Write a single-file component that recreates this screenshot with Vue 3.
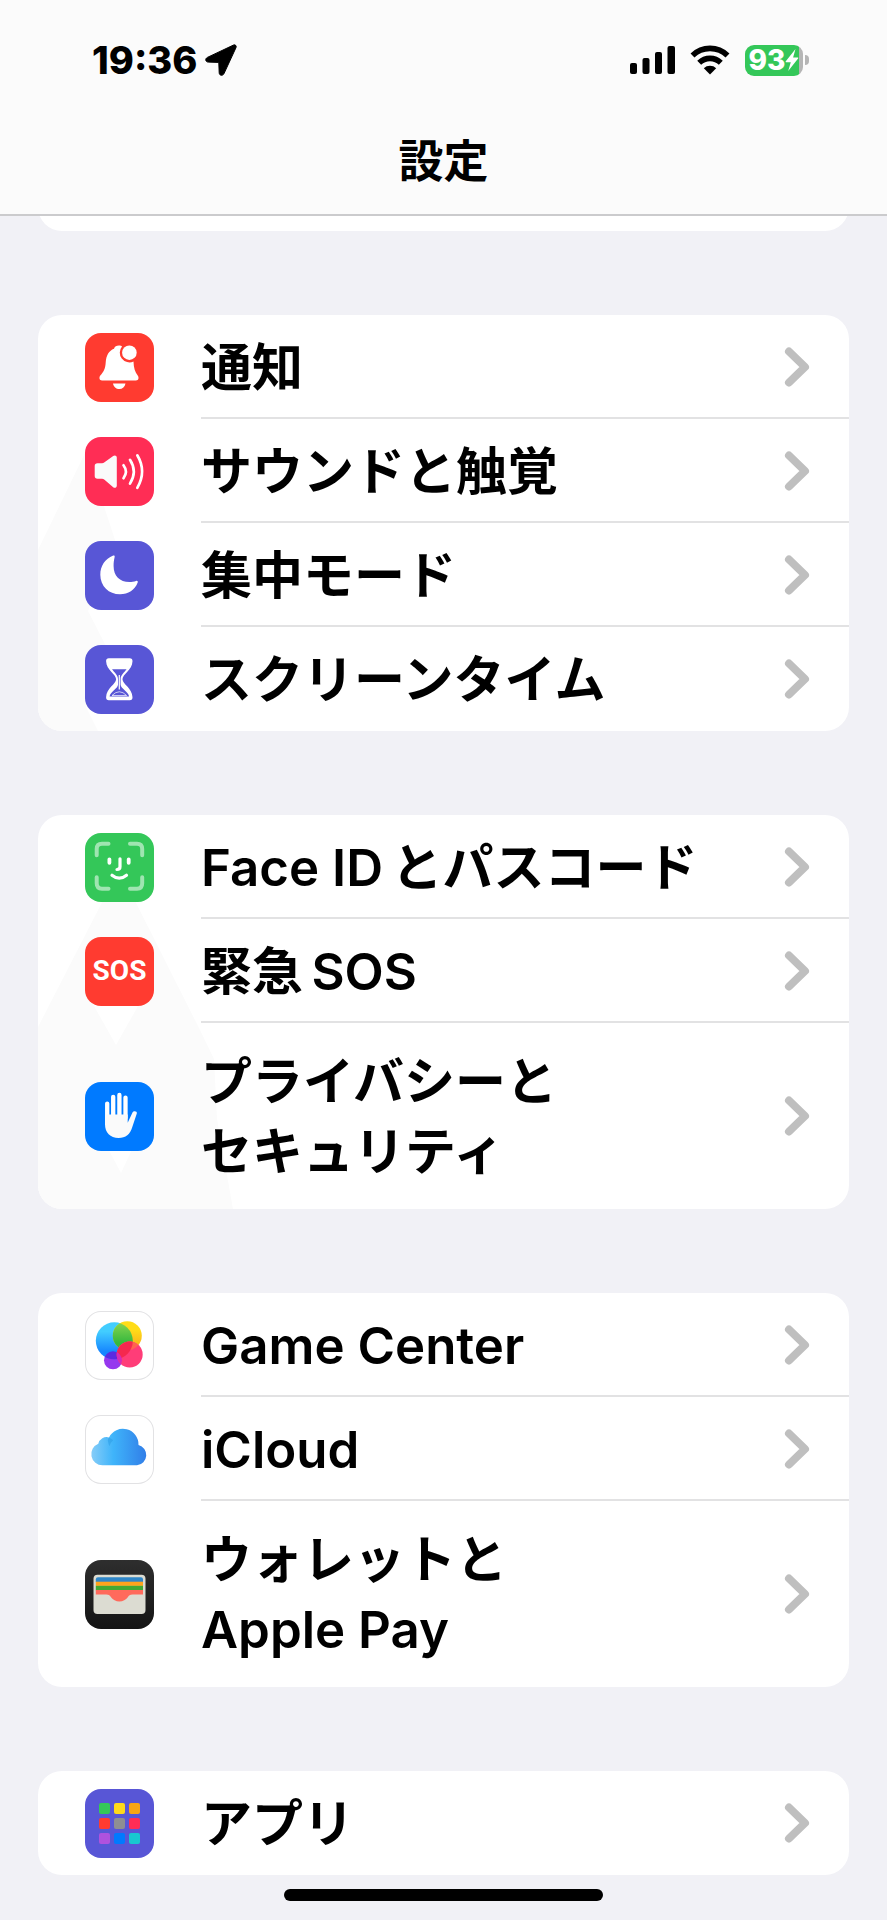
<script setup>
const groups = [
  {
    id: 'general',
    shade: 'shade-low',
    rows: [
      { icon: 'bell', lines: ['通知'] },
      { icon: 'sound', lines: ['サウンドと触覚'] },
      { icon: 'moon', lines: ['集中モード'] },
      { icon: 'hourglass', lines: ['スクリーンタイム'] },
    ],
  },
  {
    id: 'security',
    shade: 'shade-wide',
    rows: [
      { icon: 'face', lines: ['Face ID\u2009とパスコード'] },
      { icon: 'sos', lines: ['緊急\u2009SOS'] },
      { icon: 'hand', lines: ['プライバシーと', 'セキュリティ'] },
    ],
  },
  {
    id: 'services',
    shade: '',
    rows: [
      { icon: 'game', lines: ['Game Center'] },
      { icon: 'cloud', lines: ['iCloud'] },
      { icon: 'wallet', lines: ['ウォレットと', 'Apple Pay'] },
    ],
  },
  { id: 'apps', shade: '', rows: [{ icon: 'apps', lines: ['アプリ'] }] },
]

const appColors = ['#34c759', '#ffd91a', '#f7a516', '#ff3b30', '#8e8e93', '#ff2d55', '#af52de', '#007aff', '#18c8d0']
const tiles = appColors.map((fill, i) => ({ fill, x: 14 + (i % 3) * 15, y: 14 + Math.floor(i / 3) * 15 }))
</script>

<template>
  <div class="screen">
    <header class="top">
      <div class="status">
        <div class="status-side">
          <span class="clock">19:36</span>
          <svg class="locate" viewBox="0 0 32 32" aria-hidden="true">
            <path d="M28.600 1 2.400 13.400c-2.600 1.300-2 4.600.8 4.700l10 .3c.4 0 .6.2.6.6l.4 9.800c.1 3 3.600 3.400 4.800.8L31 3.600c.8-1.700-.7-3.300-2.400-2.600z" stroke="#000" />
          </svg>
        </div>
        <div class="status-side">
          <svg class="bars" viewBox="0 0 46 30" aria-hidden="true">
            <rect x="0" y="18" width="7" height="11" rx="2" />
            <rect x="12.500" y="13" width="7" height="16" rx="2" />
            <rect x="25" y="7" width="7" height="22" rx="2" />
            <rect x="37.500" y="1" width="7.500" height="28" rx="2" />
          </svg>
          <svg class="wifi" viewBox="0 0 40 30" aria-hidden="true">
            <path d="M2.500 10.500a25 25 0 0 1 35 0M9.200 17.800a15.500 15.500 0 0 1 21.600 0" fill="none" stroke="#000" stroke-width="5.600" />
            <path d="M20 29.500l-6.200-6.300a9 9 0 0 1 12.400 0z" />
          </svg>
          <div class="battery">
            <div class="battery-body">
              <span>93</span>
              <svg viewBox="0 0 14 22" aria-hidden="true"><path d="M10.500 0 .8 12.200c-.4.500-.1 1 .5 1h4.500L3.200 22l9.900-12.400c.4-.5.100-1-.5-1H8.100z" fill="#fff" /></svg>
            </div>
            <i class="battery-tip"></i>
          </div>
        </div>
      </div>
      <h1>設定</h1>
    </header>

    <main class="list">
      <div class="card card-tail"></div>
      <ul v-for="group in groups" :key="group.id" class="card" :class="group.shade">
        <li v-for="row in group.rows" :key="row.icon">
          <a class="row" href="#">
            <span class="tile" :class="row.icon">
              <span v-if="row.icon === 'sos'" class="sos-text" aria-hidden="true">SOS</span>
              <svg v-else viewBox="0 0 69 69" aria-hidden="true">
                <g v-if="row.icon === 'bell'" fill="#fff">
                  <path d="M34 12.500c1.400 0 2.500.4 3 .9a9.800 9.800 0 0 0 11.500 15.200c.2 6.400 1.600 10.700 4.200 13.900 1.500 1.900 1 5-1.700 5H17c-2.700 0-3.200-3.100-1.700-5 3.300-3.700 5-6.700 5.400-13 .4-7.500 3.400-11.800 8.300-13.800.6-2 2.500-3.200 5-3.200z" />
                  <path d="M28 50.500h12.500c-.6 3.500-3 5.500-6.200 5.500S28.600 54 28 50.500z" />
                  <circle cx="44.400" cy="19.700" r="7.300" />
                </g>
                <g v-else-if="row.icon === 'sound'">
                  <path d="M12.500 26.300h4.500c1 0 1.700-.3 2.500-1l8.700-6.300c1.600-1.200 3.600-.3 3.600 1.500v28.300c0 1.800-2 2.700-3.600 1.500l-8.700-7.500c-.8-.7-1.500-1-2.500-1h-4.500c-1.800 0-2.800-1-2.800-2.800v-9.900c0-1.800 1-2.800 2.800-2.800z" fill="#fafafa" />
                  <path d="M38.500 28.200q4.800 6.300 0 13M45 22.800q7.600 11.700 0 23.800M52.300 18.300q9.600 16.200 0 32.600" fill="none" stroke="#fff" stroke-width="2.700" stroke-linecap="round" />
                </g>
                <path v-else-if="row.icon === 'moon'" d="M28.200 14.600C20 18 15.300 25 15.300 33.700c0 11.300 8.500 19.600 19.700 19.600 8.300 0 14.800-4.300 17.700-11.700.5-1.300-.4-2.200-1.700-1.700-2 .8-4.300 1.100-6.500 1.100C34.600 41 28.600 35 28.600 25c0-3.300.4-6.300 1-8.700.4-1.400-.3-2.100-1.400-1.700z" fill="#fff" />
                <g v-else-if="row.icon === 'hourglass'">
                  <path d="M23.800 13.300h21c1.800 0 2.800 1.200 2.700 3-.3 9-10 13-10 18s9.700 8.500 10 18c.1 1.800-.9 3-2.700 3h-21c-1.800 0-2.800-1.200-2.700-3 .3-9.500 10-13 10-18s-9.700-9-10-18c-.1-1.800.9-3 2.700-3z" fill="#fff" />
                  <path d="M27 24.300h14.600c-2 3-6 5.700-6 9.700v5.500c0 4 8 7.500 8.500 12H24.600c.5-4.500 8.400-8 8.400-12V34c0-4-4-6.700-6-9.700z" fill="#5856d6" />
                  <path d="M34.300 30v14.500" stroke="#fff" stroke-width="1.200" />
                  <path d="M27 50.500q7.300-7.500 14.600 0z" fill="#5856d6" stroke="#fff" stroke-width=".7" />
                </g>
                <g v-else-if="row.icon === 'face'" fill="none" stroke="#fff" stroke-width="4" stroke-linecap="round" stroke-linejoin="round">
                  <path d="M11.700 22.300V16q0-5.300 5.300-5.300h6.500M45 10.700h7q5.200 0 5.200 5.300v6.300M57.200 44.300v6q0 5.400-5.200 5.400h-7M23.500 55.700H17q-5.300 0-5.300-5.400v-6" stroke-opacity=".53" />
                  <path d="M24.400 26.300v3.500M43.700 26.300v3.500" stroke-width="3.800" />
                  <path d="M35 25.800v8q0 2.700-3 2.700M27 42.200c4.500 3.800 10 3.800 14.500 0" stroke-width="3.200" />
                </g>
                <g v-else-if="row.icon === 'hand'">
                  <path d="M22.200 40V21.600M28.200 36V14.800M34.400 36V13M40.500 36V15.600" fill="none" stroke="#fff" stroke-width="4.300" stroke-linecap="round" />
                  <path d="M20 32.500h22.700v8.300l4.800-10.400c.8-1.700 5-1.500 4.300 1L47.300 45c-2 7.200-6.700 11-13.700 11-8.300 0-13.600-5.300-13.600-13.700z" fill="#fafafa" />
                </g>
                <g v-else-if="row.icon === 'game'">
                  <defs>
                    <linearGradient id="gcBlue" x2="0" y2="1"><stop offset=".25" stop-color="#42cdff" /><stop offset=".8" stop-color="#1686ff" /></linearGradient>
                    <linearGradient id="gcYellow" x2="0" y2="1"><stop offset=".3" stop-color="#ffdc18" /><stop offset="1" stop-color="#f8a61c" /></linearGradient>
                    <linearGradient id="gcGreen" x2="0" y2="1"><stop offset="0" stop-color="#8dd650" /><stop offset=".75" stop-color="#35b83e" /></linearGradient>
                    <clipPath id="gcClip"><circle cx="29.300" cy="29.800" r="18.500" /></clipPath>
                    <clipPath id="gcPink"><circle cx="44.700" cy="43.500" r="13" /></clipPath>
                  </defs>
                  <circle cx="28" cy="49.300" r="9" fill="#9637ee" />
                  <circle cx="29.300" cy="29.800" r="18.500" fill="url(#gcBlue)" />
                  <circle cx="28" cy="49.300" r="9" fill="#5b2be0" clip-path="url(#gcClip)" />
                  <circle cx="42.300" cy="24.700" r="14.500" fill="url(#gcYellow)" />
                  <circle cx="42.300" cy="24.700" r="14.500" fill="url(#gcGreen)" clip-path="url(#gcClip)" />
                  <circle cx="44.700" cy="43.500" r="13" fill="#ff3d78" />
                  <g clip-path="url(#gcPink)">
                    <circle cx="42.300" cy="24.700" r="14.500" fill="#ff6350" />
                    <circle cx="29.300" cy="29.800" r="18.500" fill="#f5284f" />
                    <circle cx="28" cy="49.300" r="9" fill="#d42bb8" />
                  </g>
                </g>
                <g v-else-if="row.icon === 'cloud'">
                  <defs>
                    <linearGradient id="cloudFill"><stop offset="0" stop-color="#86cdf8" /><stop offset=".4" stop-color="#3fb4fa" /><stop offset="1" stop-color="#317ee8" /></linearGradient>
                  </defs>
                  <path d="M17.500 50.300a11.200 11.200 0 0 1-4.200-21.600 8.600 8.600 0 0 1 10.700-6.300 15.600 15.600 0 0 1 29.500 7.500 10.400 10.400 0 0 1-1.500 20.400z" fill="url(#cloudFill)" />
                  <path d="M24 22.400q2.600.8 4.200 2.900-2.700 2.200-3.800 6-1.400-4-1.600-6 .4-1.700 1.200-2.900z" fill="#2f9ee6" fill-opacity=".6" />
                </g>
                <g v-else-if="row.icon === 'wallet'">
                  <rect x="8.500" y="14.700" width="52" height="39.300" rx="4" fill="#dcdcd2" />
                  <path d="M10.800 22v-2.500q0-2.200 2.200-2.200h43q2 0 2 2.200V22z" fill="#2f86c8" />
                  <rect x="10.800" y="21.700" width="47.200" height="4.200" fill="#ffa31c" />
                  <rect x="10.800" y="25.800" width="47.200" height="4.400" fill="#43a833" />
                  <path d="M10.800 30H58v4.500H47.500c-2.700 0-3.500 1-4.700 2.700-2 2.700-4.800 4.200-8.400 4.200s-6.400-1.500-8.400-4.200c-1.200-1.700-2-2.700-4.700-2.700H10.800z" fill="#ff6a5c" />
                </g>
                <g v-else>
                  <rect v-for="t in tiles" :key="t.fill" :x="t.x" :y="t.y" width="11" height="11" rx="2" :fill="t.fill" />
                </g>
              </svg>
            </span>
            <span class="body">
              <span class="label"><span v-for="line in row.lines" :key="line">{{ line }}</span></span>
              <svg class="chevron" viewBox="0 0 26 42" aria-hidden="true"><path d="M5 5.500 21 21 5 36.500" /></svg>
            </span>
          </a>
        </li>
      </ul>
    </main>

    <div class="home"><i></i></div>
  </div>
</template>

<style>
body {
  background: #f1f1f6;
}
</style>

<style scoped>
.screen {
  min-height: 100vh;
  box-sizing: border-box;
  background: #f1f1f6;
  color: #000;
  font-family: Inter, "Noto Sans CJK JP", sans-serif;
}

.top {
  position: relative;
  z-index: 1;
  background: #fbfbfb;
  border-bottom: 2px solid #cbcbcd;
}

.status {
  display: flex;
  justify-content: space-between;
  align-items: center;
  padding: 40px 78px 0 92px;
  height: 40px;
}

.status-side {
  display: flex;
  align-items: center;
}

.clock {
  font-size: 38px;
  font-weight: 800;
  line-height: 42px;
}

.locate {
  width: 32px;
  height: 32px;
  margin-left: 8px;
}

.bars {
  width: 46px;
  height: 30px;
}

.wifi {
  width: 40px;
  height: 30px;
  margin-left: 14px;
}

.battery {
  display: flex;
  align-items: center;
  gap: 2px;
  margin-left: 15px;
}

.battery-body {
  display: flex;
  align-items: center;
  justify-content: center;
  width: 58px;
  height: 31px;
  border-radius: 9px;
  background: linear-gradient(to right, #34c759 93%, #b5b5b5 93%);
  color: #fff;
  font-size: 28px;
  font-weight: 800;
  line-height: 31px;
}

.battery-body svg {
  width: 14px;
  height: 22px;
}

.battery-tip {
  width: 4px;
  height: 10px;
  border-radius: 0 5px 5px 0;
  background: #b5b5b5;
}

h1 {
  margin: 0;
  padding: 50px 0 20px;
  font-size: 45px;
  font-weight: 700;
  line-height: 64px;
  text-align: center;
}

.list {
  display: flex;
  flex-direction: column;
  gap: 84px;
  padding: 0 38px;
}

.card {
  position: relative;
  margin: 0;
  padding: 0;
  list-style: none;
  border-radius: 24px;
  background: #fff;
  overflow: hidden;
}

/* End of the group that has scrolled under the header */
.card-tail {
  height: 55px;
  margin-top: -40px;
}

/* Faint shading behind the icons */
.shade-low::before,
.shade-wide::before {
  content: "";
  position: absolute;
  left: 0;
  bottom: 0;
  background: #fbfbfb;
}

.shade-low::before {
  width: 80px;
  height: 280px;
  clip-path: polygon(0 99px, 48px 0, 78px 92px, 50px 160px, 68px 195px, 48px 256px, 60px 280px, 0 280px);
}

.shade-wide::before {
  width: 196px;
  height: 330px;
  clip-path: path(evenodd, "M0 148 L76 0 H86 L162 151 L176 180 L179 240 L195 330 H0 Z M52 120 H104 L78 166 Z M66 262 H98 L83 294 Z");
}

.row {
  position: relative;
  display: flex;
  align-items: center;
  padding-left: 47px;
  color: inherit;
  text-decoration: none;
}

.tile {
  display: flex;
  align-items: center;
  justify-content: center;
  flex: none;
  width: 69px;
  height: 69px;
  border-radius: 16px;
  overflow: hidden;
}

.tile svg {
  width: 100%;
  height: 100%;
}

.bell,
.sos {
  background: #ff3b30;
}

.sound {
  background: #ff2d55;
}

.moon,
.hourglass,
.apps {
  background: #5856d6;
}

.face {
  background: #34c759;
}

.hand {
  background: #007aff;
}

.game,
.cloud {
  background: #fff;
  box-shadow: inset 0 0 0 1px #e2e2e4;
}

.wallet {
  background: linear-gradient(#2e2e2e, #141414);
}

.sos-text {
  color: #fff;
  font-family: Roboto, sans-serif;
  font-size: 28px;
  font-weight: 700;
  line-height: 36px;
}

.body {
  flex: 1;
  display: flex;
  align-items: center;
  justify-content: space-between;
  min-height: 70px;
  margin-left: 47px;
  padding: 17px 39px 15px 0;
  border-bottom: 2px solid #e2e2e3;
}

li:last-child .body {
  border-bottom-color: transparent;
}

.label {
  display: flex;
  flex-direction: column;
  margin: 1px 0 -1px;
  font-size: 51px;
  font-weight: 600;
  line-height: 70px;
}

.label span:first-child:not(:last-child) {
  padding-top: 6px;
}

.label span + span {
  padding-bottom: 6px;
}

.chevron {
  flex: none;
  width: 26px;
  height: 42px;
}

.chevron path {
  fill: none;
  stroke: #bfbfbf;
  stroke-width: 8;
  stroke-linecap: round;
  stroke-linejoin: round;
}

.home {
  display: flex;
  justify-content: center;
  padding: 14px 0 19px;
}

.home i {
  width: 36%;
  height: 12px;
  border-radius: 6px;
  background: #000;
}
</style>
